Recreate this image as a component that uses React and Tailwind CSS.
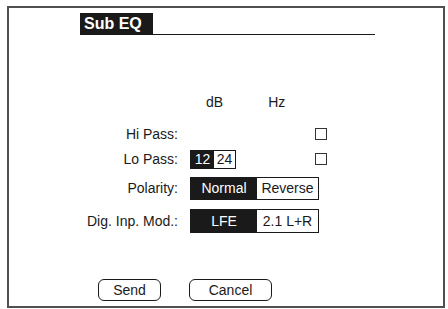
import React, { useState } from 'react';

const font = { fontFamily: '"Liberation Sans", Arial, sans-serif' };

// Segmented two-option switch: selected side is filled black
const Segment = ({ options, value, onChange, widths, height }) => (
  <div className={`flex border border-[#1a1a1a] ${height}`}>
    {options.map((opt, i) => (
      <button
        key={opt}
        type="button"
        onClick={() => onChange(opt)}
        className={`flex items-center justify-center text-[14px] leading-none ${widths[i]} ${
          value === opt ? 'bg-[#1a1a1a] text-white' : 'bg-white text-[#1a1a1a]'
        }`}
      >
        {opt}
      </button>
    ))}
  </div>
);

const Check = ({ checked, onChange }) => (
  <button
    type="button"
    onClick={() => onChange(!checked)}
    className="w-[12px] h-[12px] border border-[#333] bg-white flex items-center justify-center"
  >
    {checked && <span className="block w-[6px] h-[6px] bg-[#1a1a1a]" />}
  </button>
);

const Label = ({ children }) => (
  <div className="w-[170px] pr-[1px] text-right text-[14px] text-[#1a1a1a]">{children}</div>
);

export default function App() {
  const [hiPass, setHiPass] = useState(false);
  const [loPass, setLoPass] = useState(false);
  const [slope, setSlope] = useState('12');
  const [polarity, setPolarity] = useState('Normal');
  const [mode, setMode] = useState('LFE');

  return (
    <div className="w-[448px] h-[309px] bg-white pt-[6px] pl-[7px]" style={font}>
      <div className="w-[438px] h-[302px] border-2 border-[#505050] flex flex-col">
        {/* Title */}
        <div className="flex items-end ml-[71px] mt-[5px]">
          <div className="w-[73px] h-[22px] bg-[#1a1a1a] text-white font-bold text-[16px] flex items-center pl-[4px]">
            Sub EQ
          </div>
          <div className="w-[222px] border-b border-[#1a1a1a]" />
        </div>

        {/* Column heads */}
        <div className="flex items-center h-[20px] mt-[57px] text-[14px] text-[#1a1a1a]">
          <div className="w-[170px]" />
          <div className="ml-[27px]">dB</div>
          <div className="ml-[45px]">Hz</div>
        </div>

        {/* Hi Pass */}
        <div className="flex items-center h-[24px] mt-[10px]">
          <Label>Hi Pass:</Label>
          <div className="ml-[136px]">
            <Check checked={hiPass} onChange={setHiPass} />
          </div>
        </div>

        {/* Lo Pass */}
        <div className="flex items-center h-[24px] mt-[1px]">
          <Label>Lo Pass:</Label>
          <div className="ml-[11px]">
            <Segment
              options={['12', '24']}
              value={slope}
              onChange={setSlope}
              widths={['w-[23px]', 'w-[21px]']}
              height="h-[19px]"
            />
          </div>
          <div className="ml-[79px]">
            <Check checked={loPass} onChange={setLoPass} />
          </div>
        </div>

        {/* Polarity */}
        <div className="flex items-center h-[24px] mt-[5px]">
          <Label>Polarity:</Label>
          <div className="ml-[11px]">
            <Segment
              options={['Normal', 'Reverse']}
              value={polarity}
              onChange={setPolarity}
              widths={['w-[66px]', 'w-[61px]']}
              height="h-[23px]"
            />
          </div>
        </div>

        {/* Digital input mode */}
        <div className="flex items-center h-[24px] mt-[9px]">
          <Label>Dig. Inp. Mod.:</Label>
          <div className="ml-[11px]">
            <Segment
              options={['LFE', '2.1 L+R']}
              value={mode}
              onChange={setMode}
              widths={['w-[66px]', 'w-[61px]']}
              height="h-[24px]"
            />
          </div>
        </div>

        {/* Actions */}
        <div className="flex items-center mt-[46px] ml-[89px]">
          <button
            type="button"
            className="w-[63px] h-[22px] border border-[#1a1a1a] rounded-[6px] text-[14px] text-[#1a1a1a] bg-white"
          >
            Send
          </button>
          <button
            type="button"
            className="ml-[28px] w-[83px] h-[22px] border border-[#1a1a1a] rounded-[6px] text-[14px] text-[#1a1a1a] bg-white"
          >
            Cancel
          </button>
        </div>
      </div>
    </div>
  );
}
